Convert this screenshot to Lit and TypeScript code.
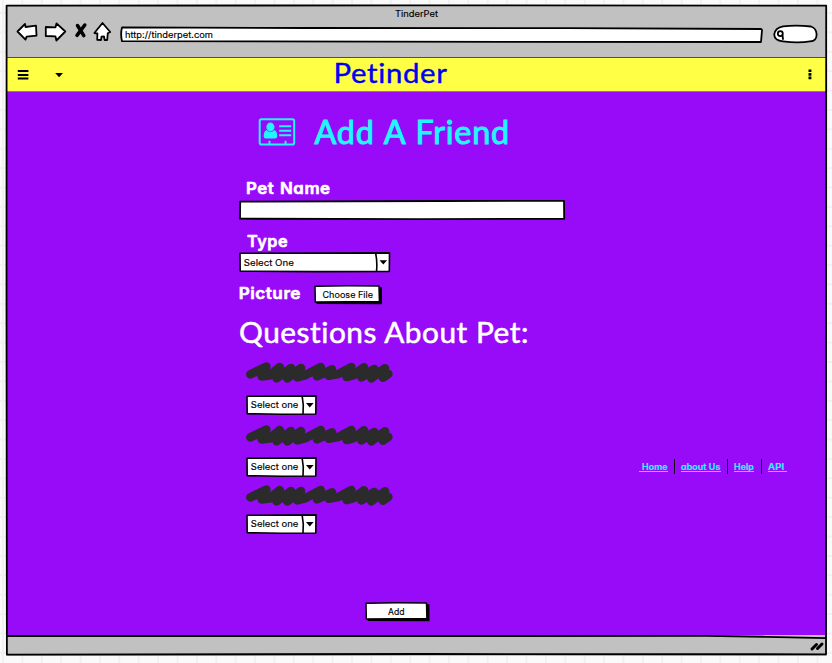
import { LitElement, html, css } from "lit";
import { customElement, property } from "lit/decorators.js";

/** A line of lettering fitted to a fixed advance width. */
@customElement("ink-text")
class InkText extends LitElement {
  @property() text = "";
  @property({ type: Number }) x = 0;
  @property({ type: Number }) w = 50;
  @property({ type: Number }) h = 20;
  @property({ type: Number }) base = 14;
  @property() kind = "small";
  static styles = css`
    :host { display: block; flex: none; }
    svg { display: block; overflow: visible; }
    text { font-family: Inter, "Liberation Sans", sans-serif; font-feature-settings: "cv11" 1; font-variant-ligatures: none; }
    .small { font-size: 9px; fill: #000; stroke: #000; stroke-width: .15px; }
    .link { font-size: 9px; font-weight: 600; fill: #2cf4ff; stroke: #2cf4ff; stroke-width: .2px; }
    .label { font-size: 16.5px; font-weight: 600; letter-spacing: .5px; word-spacing: 1px; fill: #fff; stroke: #fff; stroke-width: .6px; stroke-linejoin: round; }
    .brand { font-family: Lato, sans-serif; font-size: 27.3px; letter-spacing: .6px; fill: #0000f5; stroke: #0000f5; stroke-width: .4px; stroke-linejoin: round; }
    .title { font-family: Lato, sans-serif; font-size: 32.5px; letter-spacing: .8px; word-spacing: 1px; fill: #20f6ff; stroke: #20f6ff; stroke-width: 1px; stroke-linejoin: round; }
    .heading { font-family: Lato, sans-serif; font-size: 28px; letter-spacing: .5px; fill: #fff; stroke: #fff; stroke-width: .5px; stroke-linejoin: round; }
  `;
  render() {
    return html`<svg width=${this.x + this.w} height=${this.h}>
      <text class=${this.kind} x=${this.x} y=${this.base} textLength=${this.w} lengthAdjust="spacingAndGlyphs">${this.text}</text>
    </svg>`;
  }
}

/** Sketched drop-down. */
@customElement("pet-select")
class PetSelect extends LitElement {
  @property() text = "";
  @property({ type: Number }) w = 71;
  @property({ type: Number }) h = 20;
  @property({ type: Number }) tw = 47.5;
  @property({ type: Number }) base = 13;
  static styles = css`
    :host { display: block; }
    svg { display: block; overflow: visible; }
    .box { fill: #fff; stroke: #000; stroke-width: 1.6; stroke-linejoin: round; }
    .line { stroke: #000; stroke-width: 1.6; fill: none; }
    text { font: 9px Inter, "Liberation Sans", sans-serif; stroke: #000; stroke-width: .15px; }
  `;
  render() {
    const { w, h } = this;
    return html`<svg width=${w} height=${h}>
      <path class="box" d="M1 1.3L${w - 1} .9L${w - 1.2} ${h - 1}L${w / 2} ${h - 0.8}L1.2 ${h - 1.3}Z"/>
      <path class="line" d="M${w - 14.8} 1.5Q${w - 13} ${h / 2} ${w - 14} ${h - 1}"/>
      <path d="M${w - 11} ${h / 2 - 2}h7.6l-3.8 4.4z"/>
      <text x="4.8" y=${this.base} textLength=${this.tw} lengthAdjust="spacingAndGlyphs">${this.text}</text>
    </svg>`;
  }
}

/** Sketched push button with a hard shadow. */
@customElement("pet-button")
class PetButton extends LitElement {
  @property() text = "";
  @property({ type: Number }) w = 68;
  @property({ type: Number }) tx = 8;
  @property({ type: Number }) tw = 50.5;
  @property({ type: Number }) base = 12.6;
  static styles = css`
    :host { display: block; }
    svg { display: block; overflow: visible; }
    .box { fill: #fff; stroke: #000; stroke-width: 1.5; stroke-linejoin: round; }
    text { font: 9px Inter, "Liberation Sans", sans-serif; stroke: #000; stroke-width: .15px; }
  `;
  render() {
    const w = this.w;
    return html`<svg width=${w} height="20">
      <path d="M3 3L${w} 2.3L${w} 19.2L3 18.9L2 17Z"/>
      <path class="box" d="M1 1.2L${w / 2} .8L${w - 3} 1L${w - 2.6} 16.6L1.3 17Z"/>
      <text x=${this.tx} y=${this.base} textLength=${this.tw} lengthAdjust="spacingAndGlyphs">${this.text}</text>
    </svg>`;
  }
}

const scribble = html`<svg class="scribble" width="148" height="22" viewBox="49 154 444 66">
  <path d="M62 191L110 168L96 197L120 194L150 169L141 203L184 172L173 203L214 172L203 200L226 194L273 169L262 197L307 176L297 195L326 190L365 169L351 199L372 193L403 170L395 200L434 175L425 203L466 173L460 201L476 190"/>
</svg>`;

@customElement("app-root")
class AppRoot extends LitElement {
  static styles = css`
    :host {
      display: block; box-sizing: border-box; width: 832px; height: 663px; padding: 5px 0 0 6px; overflow: hidden;
      background-color: #fafafa;
      background-image: linear-gradient(90deg, #f1f1f1 1.5px, transparent 1.5px), linear-gradient(#f1f1f1 1.5px, transparent 1.5px);
      background-size: 19.4px 19.4px; background-position: 2px 12px;
    }
    svg { display: block; overflow: visible; flex: none; }
    .window { position: relative; width: 821px; height: 651px; display: flex; flex-direction: column; background: #c1c1c1; }
    .frame { position: absolute; inset: 0; pointer-events: none; }
    .frame path { fill: none; stroke: #000; stroke-width: 1.8; stroke-linejoin: round; }
    .chrome { height: 52px; display: flex; flex-direction: column; }
    .tools { display: flex; }
    .tools path, .tools circle { fill: #fff; stroke: #000; stroke-width: 1.8; stroke-linejoin: round; stroke-linecap: round; }
    .tools .none { fill: none; }
    .tools .cross { stroke-width: 3.5; fill: none; }
    .nav { height: 35px; box-sizing: border-box; border-top: 1px solid #55551d; border-bottom: 1px solid #8a8a3a; background: #ffff45; display: flex; }
    .main { height: 543px; background: #980bf9; display: grid; grid-template-columns: 633px 1fr; }
    .status { flex: 1; display: flex; justify-content: flex-end; padding: 7px 3px 0 0; }
    .status path { stroke: #000; stroke-width: 3; stroke-linecap: round; }
    .form { padding-left: 233px; display: flex; flex-direction: column; }
    .row { display: flex; flex: none; }
    .hero { height: 78px; }
    .hero svg { margin: 26px 0 0 19px; }
    .picture { height: 42px; }
    .picture pet-button { margin: 13px 0 0 13px; }
    .field { width: 326px; height: 20px; }
    .field path { fill: #fff; stroke: #000; stroke-width: 1.8; stroke-linejoin: round; }
    .scribble path { fill: none; stroke: #2b2b2b; stroke-width: 26; stroke-linecap: round; stroke-linejoin: round; }
    .question { flex: none; padding-left: 7px; }
    .q1 { height: 55px; padding-top: 6px; }
    .q2 { height: 51px; padding-top: 8px; }
    .q3 { height: 49px; padding-top: 9px; }
    .question pet-select { margin-top: 11px; }
    .q2 pet-select { margin-top: 10px; }
    .q3 pet-select { margin-top: 7px; }
    .submit { margin: 68px 0 0 126px; }
    .links { padding-top: 366px; display: flex; height: 20px; }
    .links a { height: 13.4px; border-bottom: 1px solid #42d8fb; flex: none; }
    .bar { width: 1.6px; height: 15px; background: #14001f; flex: none; margin-top: 1px; }
    .home { margin-right: 6px; }
    .about { margin: 0 6.3px 0 6px; }
    .help { margin: 0 6.6px 0 6px; }
    .api { margin-left: 6px; padding-right: 2px; }
  `;

  render() {
    return html`
      <div class="window">
        <div class="chrome">
          <ink-text text="TinderPet" .x=${389} .w=${43} .h=${16} .base=${12}></ink-text>
          <div class="tools">
            <svg width="820" height="30">
              <path d="M11.5 10.5L19 3L19.6 6L30 4.7L30.5 14.6L20.6 15.6L19.5 18.6Z"/>
              <path d="M39.8 6L49.5 6.3L50.5 2.4L59.3 10.5L50.4 19.5L49.4 15.3L39.8 15Z"/>
              <path class="cross" d="M71.5 4.5L77.8 14.6M78.8 4L71 14.4"/>
              <path d="M96.5 2L104.2 11L101.8 12.2L101.2 19L98.6 19L98 15.5L95.5 15.6L95 19L91.2 18.8L91.4 12.5L88.4 12Z"/>
              <path d="M116 6.4L300 7L560 7.2L755 8L756 9L755 21L500 20.8L116 20.2Q114.3 13 116 6.4Z"/>
              <path d="M777 5.4Q790 3.9 805 5.5Q810 7 810.6 13Q811 20 804 20.4Q792 22.5 777 20.4Q768.5 19.5 768.2 13.5Q769 7 777 5.4Z"/>
              <circle class="none" cx="774.3" cy="12.6" r="2.5"/><path class="none" d="M776.5 14.5L777 18"/>
              <foreignObject x="116" y="5" width="110" height="18"><ink-text text="http://tinderpet.com" .x=${3} .w=${88} .h=${16} .base=${11.5}></ink-text></foreignObject>
            </svg>
          </div>
        </div>
        <div class="nav">
          <svg width="72" height="33">
            <path d="M11.8 12h10.6v2h-10.6zM11.8 16h10.6v2h-10.6zM11.8 19.6h10.6v2h-10.6z"/>
            <path d="M49.2 15h7.8l-3.9 4.2z"/>
          </svg>
          <ink-text kind="brand" text="Petinder" .x=${255.5} .w=${114} .h=${33} .base=${25.3}></ink-text>
          <svg width="370" height="33"><path d="M360.5 11.4h2.9v2.7h-2.9zM360.5 15h2.9v2.7h-2.9zM360.5 18.6h2.9v2.7h-2.9z"/></svg>
        </div>
        <div class="main">
          <div class="form">
            <div class="row hero">
              <svg width="38" height="28">
                <g fill="none" stroke="#20f6ff" stroke-width="2"><rect x="1.7" y="1.2" width="34.5" height="25.3" rx="1.8"/><path d="M21.2 8.2h12M21.2 12.7h12M21.2 17.2h12M11.5 22.8v3.3M27.5 22.8v3.3"/></g>
                <path fill="#20f6ff" d="M12.4 4.6a4.1 4.4 0 0 1 0 8.8a4.1 4.4 0 0 1 0-8.8zM8.5 12Q12.5 16 16.4 12Q19.6 13.8 19.2 18.8Q19 20.5 17 20.5H7.7Q5.8 20.5 5.7 18.8Q5.4 13.8 8.5 12Z"/>
              </svg>
              <ink-text kind="title" text="Add A Friend" .x=${18.5} .w=${195.5} .h=${78} .base=${51.8}></ink-text>
            </div>
            <ink-text kind="label" text="Pet Name" .x=${7} .w=${84.6} .h=${30} .base=${24}></ink-text>
            <div class="field"><svg width="326" height="20"><path d="M1.2 1.6L200 1L325 .9L325.2 18.8L180 19.2L1 18.7Z"/></svg></div>
            <ink-text kind="label" text="Type" .x=${8} .w=${41} .h=${32} .base=${26.6}></ink-text>
            <pet-select text="Select One" .w=${151.5} .h=${20.4} .tw=${50} .base=${14}></pet-select>
            <div class="row picture">
              <ink-text kind="label" text="Picture" .x=${-0.3} .w=${62.3} .h=${42} .base=${26.6}></ink-text>
              <pet-button text="Choose File" .tx=${8.5}></pet-button>
            </div>
            <ink-text kind="heading" text="Questions About Pet:" .x=${0} .w=${290} .h=${42} .base=${28.8}></ink-text>
            <div class="question q1">${scribble}<pet-select text="Select one"></pet-select></div>
            <div class="question q2">${scribble}<pet-select text="Select one"></pet-select></div>
            <div class="question q3">${scribble}<pet-select text="Select one"></pet-select></div>
            <div class="submit"><pet-button text="Add" .w=${64.5} .tx=${23} .tw=${16.5}></pet-button></div>
          </div>
          <nav class="links">
            <a class="home"><ink-text kind="link" text="Home" .x=${3} .w=${25.5} .h=${13} .base=${12}></ink-text></a>
            <span class="bar"></span>
            <a class="about"><ink-text kind="link" text="about Us" .x=${0} .w=${39.5} .h=${13} .base=${12}></ink-text></a>
            <span class="bar"></span>
            <a class="help"><ink-text kind="link" text="Help" .x=${0} .w=${19.8} .h=${13} .base=${12}></ink-text></a>
            <span class="bar"></span>
            <a class="api"><ink-text kind="link" text="API" .x=${0} .w=${16.2} .h=${13} .base=${12}></ink-text></a>
          </nav>
        </div>
        <div class="status"><svg width="14" height="9"><path d="M2 7L6.5 2.5M7.5 6.5L12 2"/></svg></div>
        <svg class="frame" width="821" height="651">
          <path d="M.6 .6L400 .4L820.2 .6L820 649.3L420 649L.9 649.6L.5 300Z"/>
          <path d="M1 631L500 631L700 630.8L760 631.8L820 633.2"/>
        </svg>
      </div>`;
  }
}
